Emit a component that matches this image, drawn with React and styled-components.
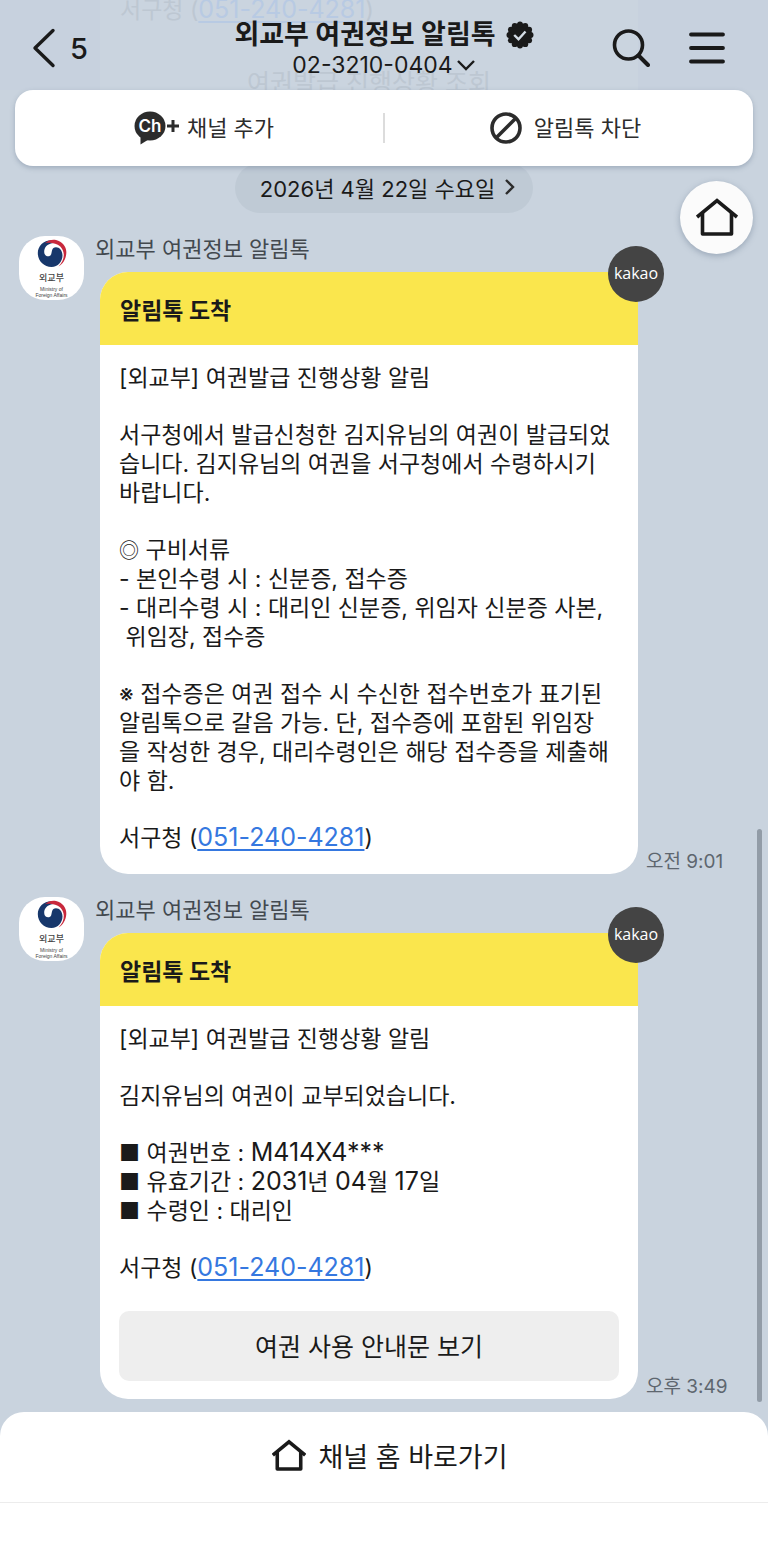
import React from 'react'
import styled, { createGlobalStyle } from 'styled-components'

const GlobalStyle = createGlobalStyle`
 *{
    box-sizing: border-box;
 }
 body{
    margin:0;
    background: #c9d3de;
    font-family: Inter, 'Noto Sans CJK KR', sans-serif;
    color: #1a1a1a;
 }
 button{
    font-family: inherit;
    color: inherit;
    background:none;
    border:none;
    padding:0;
    cursor:pointer;
 }
 p, h1, h2{
    margin:0;
 }
 svg{
    display:block;
    flex:none;
 }`

const StyledPage = styled.div`
 min-height:100vh;
 display:flex;
 flex-direction:column;
 position:relative;
 `

const StyledHeader = styled.header`
 position:relative;
 display:grid;
 grid-template-columns: 1fr auto 1fr;
 height:90px;
 padding: 0 32px;
 overflow:hidden;
 background: #c7d1de;
 `

/* the earlier message, seen through the header */
const StyledGhost = styled.div`
 position:absolute;
 top:0;
 bottom:0;
 left:100px;
 right:130px;
 padding: 0 20px;
 background: #cad4df;
 color: #bdc7d2;
 font-size: 23px;
 line-height: 29px;
 display:flex;
 flex-direction:column;
 justify-content:space-between;
 p{
    margin-top:-4px;
 }
 span{
    color: #b8cae3;
    font-size: 25px;
    line-height: 1;
    text-decoration: underline;
    text-underline-offset: 3px;
 }
 div{
    margin-bottom:-8px;
    font-size: 25px;
    text-align:center;
 }
 `

const StyledBack = styled.button`
 position:relative;
 justify-self:start;
 display:flex;
 align-items:center;
 gap:14px;
 padding-top: 6px;
 font-size: 29px;
 font-weight: 500;
 `

const StyledTitle = styled.div`
 position:relative;
 display:flex;
 flex-direction:column;
 align-items:center;
 padding-top: 18px;
 h1{
    display:flex;
    align-items:center;
    gap:10px;
    font-size: 27px;
    font-weight: 700;
    line-height: 34px;
 }
 button{
    display:flex;
    align-items:center;
    gap:3px;
    font-size: 23px;
    line-height: 26px;
 }
 `

const StyledTools = styled.div`
 position:relative;
 justify-self:end;
 display:flex;
 align-items:center;
 gap:38px;
 padding: 6px 10px 0 0;
 `

const StyledActions = styled.div`
 position:relative;
 z-index:1;
 display:grid;
 grid-template-columns: 1fr 2px 1fr;
 align-items:center;
 height:76px;
 margin: 0 15px;
 border-radius: 18px;
 background: #fff;
 box-shadow: 0 2px 5px rgba(80, 100, 125, 0.35);
 `

const StyledAction = styled.button`
 display:flex;
 align-items:center;
 justify-content:center;
 gap:${({wide}) => wide ? '12px' : '7px'};
 height:100%;
 padding:${({wide}) => wide ? '0 7px 0 0' : '0 0 0 10px'};
 font-size: 22px;
 line-height: 28px;
 color: #2c2c2c;
 `

const StyledDivider = styled.div`
 height:30px;
 background: #dcdcdc;
 `

const StyledChat = styled.main`
 flex:1;
 position:relative;
 display:flex;
 flex-direction:column;
 `

const StyledDate = styled.button`
 align-self:center;
 display:flex;
 align-items:center;
 gap:9px;
 height:50px;
 margin-top:-3px;
 padding: 0 18px 3px 25px;
 border-radius: 25px;
 background: #bfcad5;
 font-size: 22px;
 `

const StyledHome = styled.button`
 position:absolute;
 top:15px;
 right:15px;
 width:73px;
 height:73px;
 display:flex;
 align-items:center;
 justify-content:center;
 border-radius: 50%;
 background: #fbfbfb;
 box-shadow: 0 2px 6px rgba(80, 100, 125, 0.4);
 `

const StyledMessages = styled.div`
 display:flex;
 flex-direction:column;
 gap:23px;
 padding: 23px 0 13px 19px;
 `

const StyledMessage = styled.article`
 display:flex;
 align-items:flex-start;
 `

const StyledAvatar = styled.div`
 flex:none;
 width:65px;
 height:64px;
 display:flex;
 flex-direction:column;
 align-items:center;
 padding-top: 3px;
 border-radius: 26px;
 background: #fff;
 color: #444;
 strong{
    margin-top: 2px;
    font-size: 9px;
    font-weight: 500;
    line-height: 14px;
 }
 small{
    margin-top: 1px;
    font-family: 'Liberation Sans', sans-serif;
    font-size: 5px;
    line-height: 6px;
    text-align:center;
 }
 `

const StyledContent = styled.div`
 flex:1;
 min-width:0;
 padding-left: 11px;
 h2{
    font-size: 22px;
    font-weight: 400;
    line-height: 26px;
    color: #43494f;
 }
 `

const StyledBubbleRow = styled.div`
 display:flex;
 align-items:flex-end;
 gap:8px;
 margin-top: 10px;
 padding-left: 5px;
 `

const StyledCard = styled.section`
 flex:1;
 min-width:0;
 position:relative;
 border-radius: 28px;
 background: #fff;
 `

const StyledCardHead = styled.div`
 display:flex;
 align-items:center;
 height:73px;
 padding: 0 20px;
 border-radius: 28px 28px 0 0;
 background: #fae64d;
 font-size: 23px;
 font-weight: 700;
 `

const StyledKakao = styled.span`
 position:absolute;
 top:-26px;
 right:-26px;
 width:56px;
 height:56px;
 display:flex;
 align-items:center;
 justify-content:center;
 border-radius: 50%;
 background: #444;
 color: #fff;
 font-family: 'Open Sans', sans-serif;
 font-size: 16px;
 font-weight: 500;
 line-height: 20px;
 padding-bottom: 2px;
 `

const StyledCardBody = styled.div`
 display:flex;
 flex-direction:column;
 gap:28px;
 padding: 19px 19px ${({action}) => action ? '18px' : '21px'};
 font-size: 23px;
 line-height: 29px;
 p{
    white-space:pre-wrap;
 }
 a{
    color: #3578e0;
    font-size: 25px;
    line-height: 1;
    text-decoration: underline;
    text-decoration-thickness: 2px;
    text-underline-offset: 3px;
 }
 `

const StyledNumber = styled.span`
 font-size: 25px;
 line-height: 1;
 `

const StyledMark = styled.span`
 font-size: 20px;
 line-height: 1;
 `

const StyledGuide = styled.button`
 height:70px;
 border-radius: 10px;
 background: #eee;
 font-size: 25px;
 padding-bottom: 2px;
 `

const StyledTime = styled.time`
 flex:none;
 width:122px;
 font-size: 19px;
 line-height: 24px;
 color: #5e666f;
 `

const StyledScrollbar = styled.div`
 position:absolute;
 right:6px;
 bottom:10px;
 width:5px;
 height:573px;
 border-radius: 3px;
 background: #929ca7;
 `

const StyledFooter = styled.footer`
 height:156px;
 border-radius: 24px 24px 0 0;
 background: #fff;
 `

const StyledChannel = styled.button`
 display:flex;
 align-items:center;
 justify-content:center;
 gap:12px;
 width:100%;
 height:91px;
 padding: 0 0 3px 12px;
 border-bottom: 1px solid #ececec;
 font-size: 27px;
 `

const HomeIcon = ({size, stroke}) => (
    <svg width={size} height={size} viewBox="0 0 42 42" fill="none" stroke="#1a1a1a" strokeWidth={stroke}>
        <path d="M1 20 21 3.500l20 16.500" />
        <path d="M6.500 16v21h29V16" strokeLinejoin="round" />
    </svg>
)

const Logo = () => (
    <svg width="30" height="30" viewBox="0 0 30 30">
        <path d="M15 1.200C6.500 1 .8 7 .8 14 .8 22 7 28 14.500 28c6.500 0 11-5.500 11-11.500 0-5-3-8.300-6.500-8.300-4.500 0-3.800 4-4.800 7C13 18.500 7.300 18 7.200 13 7.100 8.500 10 5 16 4z" fill="#17376b" />
        <path d="M8 4.200C11 1.300 15 .3 19 1c6.500 1.500 10.800 7 10.300 13-.3 6-3.300 11-7.800 13.500 3.500-3.500 5.500-7.500 5.300-12C26.500 9.500 22 4.800 16 4.200c-3.500-.4-5.500-.6-8 0z" fill="#c8283c" />
    </svg>
)

const bumps = Array.from({length: 12}, (_, i) => i * Math.PI / 6)

const Verified = () => (
    <svg width="28" height="28" viewBox="0 0 28 28" fill="#1a1a1a">
        <circle cx="14" cy="14" r="11.800" />
        {bumps.map((a) => <circle key={a} cx={14 + 10.6 * Math.cos(a)} cy={14 + 10.6 * Math.sin(a)} r="2.900" />)}
        <path d="M8.200 14l4.300 4.200 7-7.700" fill="none" stroke="#d5dde6" strokeWidth="2.400" />
    </svg>
)

const Message = ({time, action, children}) => {
  return (
    <StyledMessage>
        <StyledAvatar>
            <Logo />
            <strong>외교부</strong>
            <small>Ministry of<br />Foreign Affairs</small>
        </StyledAvatar>
        <StyledContent>
            <h2>외교부 여권정보 알림톡</h2>
            <StyledBubbleRow>
                <StyledCard>
                    <StyledCardHead>알림톡 도착</StyledCardHead>
                    <StyledCardBody action={action ? 1 : 0}>
                        {children}
                        {action && <StyledGuide>{action}</StyledGuide>}
                    </StyledCardBody>
                    <StyledKakao>kakao</StyledKakao>
                </StyledCard>
                <StyledTime>{time}</StyledTime>
            </StyledBubbleRow>
        </StyledContent>
    </StyledMessage>
  )
}

const Office = () => <p>서구청 (<a href="tel:051-240-4281">051-240-4281</a>)</p>

const App = () => {
  return (
    <StyledPage>
        <GlobalStyle />
        <StyledHeader>
            <StyledGhost aria-hidden="true">
                <p>서구청 (<span>051-240-4281</span>)</p>
                <div>여권발급 진행상황 조회</div>
            </StyledGhost>
            <StyledBack>
                <svg width="24" height="40" viewBox="0 0 24 40" fill="none" stroke="#1a1a1a" strokeWidth="3.4" strokeLinecap="round" strokeLinejoin="round">
                    <path d="M21 2.500 3 20l18 17.500" />
                </svg>
                5
            </StyledBack>
            <StyledTitle>
                <h1>
                    외교부 여권정보 알림톡
                    <Verified />
                </h1>
                <button>
                    02-3210-0404
                    <svg width="20" height="12" viewBox="0 0 20 12" fill="none" stroke="#1a1a1a" strokeWidth="2.400">
                        <path d="M2 2l8 8 8-8" />
                    </svg>
                </button>
            </StyledTitle>
            <StyledTools>
                <button aria-label="검색">
                    <svg width="38" height="38" viewBox="0 0 38 38" fill="none" stroke="#1a1a1a" strokeWidth="3.600" strokeLinecap="round">
                        <circle cx="16.500" cy="16" r="14" />
                        <path d="M26.500 26.500 36 36" strokeWidth="4" />
                    </svg>
                </button>
                <button aria-label="메뉴">
                    <svg width="38" height="32" viewBox="0 0 38 32" stroke="#1a1a1a" strokeWidth="3.800" strokeLinecap="round">
                        <path d="M3 2.500h32M3 16h32M3 29.500h32" />
                    </svg>
                </button>
            </StyledTools>
        </StyledHeader>

        <StyledActions>
            <StyledAction>
                <svg width="46" height="34" viewBox="0 0 46 34">
                    <ellipse cx="16" cy="15" rx="15.500" ry="14.500" fill="#2c2c2c" />
                    <path d="M6.500 24v9.500l8-5z" fill="#2c2c2c" />
                    <text x="16" y="21" textAnchor="middle" fontSize="17" fontWeight="600" fill="#fff">Ch</text>
                    <path d="M33 15h12M39 9v12" stroke="#2c2c2c" strokeWidth="3" />
                </svg>
                채널 추가
            </StyledAction>
            <StyledDivider />
            <StyledAction wide={1}>
                <svg width="32" height="32" viewBox="0 0 32 32" fill="none" stroke="#2c2c2c" strokeWidth="3.600">
                    <circle cx="16" cy="16" r="14" />
                    <path d="M6.500 25.500l19-19" />
                </svg>
                알림톡 차단
            </StyledAction>
        </StyledActions>

        <StyledChat>
            <StyledDate>
                2026년 4월 22일 수요일
                <svg width="11" height="16" viewBox="0 0 11 16" fill="none" stroke="#2c2c2c" strokeWidth="2.400">
                    <path d="M2 1l7 7-7 7" />
                </svg>
            </StyledDate>
            <StyledHome aria-label="홈">
                <HomeIcon size={42} stroke={3.6} />
            </StyledHome>
            <StyledMessages>
                <Message time="오전 9:01">
                    <p>[외교부] 여권발급 진행상황 알림</p>
                    <p>{'서구청에서 발급신청한 김지유님의 여권이 발급되었\n습니다. 김지유님의 여권을 서구청에서 수령하시기\n바랍니다.'}</p>
                    <p><StyledMark>◎</StyledMark>{' 구비서류\n- 본인수령 시 : 신분증, 접수증\n- 대리수령 시 : 대리인 신분증, 위임자 신분증 사본,\n 위임장, 접수증'}</p>
                    <p>{'※ 접수증은 여권 접수 시 수신한 접수번호가 표기된\n알림톡으로 갈음 가능. 단, 접수증에 포함된 위임장\n을 작성한 경우, 대리수령인은 해당 접수증을 제출해\n야 함.'}</p>
                    <Office />
                </Message>
                <Message time="오후 3:49" action="여권 사용 안내문 보기">
                    <p>[외교부] 여권발급 진행상황 알림</p>
                    <p>김지유님의 여권이 교부되었습니다.</p>
                    <p>
                        ■ 여권번호 : <StyledNumber>M414X4***</StyledNumber><br />
                        ■ 유효기간 : <StyledNumber>2031</StyledNumber>년 <StyledNumber>04</StyledNumber>월 <StyledNumber>17</StyledNumber>일<br />
                        ■ 수령인 : 대리인
                    </p>
                    <Office />
                </Message>
            </StyledMessages>
            <StyledScrollbar />
        </StyledChat>

        <StyledFooter>
            <StyledChannel>
                <HomeIcon size={34} stroke={4.4} />
                채널 홈 바로가기
            </StyledChannel>
        </StyledFooter>
    </StyledPage>
  )
}

export default App
